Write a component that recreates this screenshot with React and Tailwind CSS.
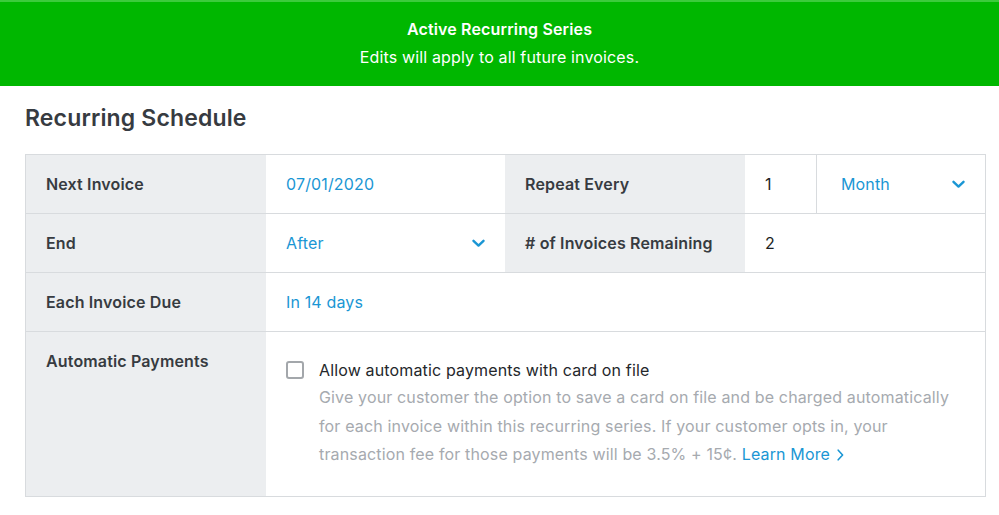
import React from 'react';

const Chevron = () => (
  <svg width="13" height="9" viewBox="0 0 13 9" className="shrink-0">
    <path d="M1.5 1.8 L6.5 6.6 L11.5 1.8" fill="none" stroke="#1a96d4" strokeWidth="2.4" strokeLinecap="round" strokeLinejoin="round" />
  </svg>
);

const Label = ({ children, className = '' }) => (
  <div className={`bg-[#eceef0] px-5 flex items-center font-semibold text-[#373b41] ${className}`}>
    {children}
  </div>
);

const App = () => {
  return (
    <div className="w-[999px] h-[515px] bg-white text-[16px] tracking-[0.15px]" style={{ fontFamily: 'Inter, "Open Sans", sans-serif' }}>
      {/* banner */}
      <div className="h-[86px] bg-[#00b700] border-t-2 border-[#3ccb3c] flex flex-col items-center justify-center text-white">
        <div className="font-semibold leading-[24px] -mt-[2px]">Active Recurring Series</div>
        <div className="leading-[24px] mt-[4px]">Edits will apply to all future invoices.</div>
      </div>

      <div className="pl-[25px] pr-[14px]">
        <h2 className="text-[23px] font-semibold text-[#373b41] h-[68px] flex items-center pb-[3px]">Recurring Schedule</h2>

        <div className="border border-[#d8dbde] w-[961px]">
          {/* row 1 */}
          <div className="grid grid-cols-[240px_239px_240px_71px_1fr] h-[58px]">
            <Label>Next Invoice</Label>
            <div className="flex items-center px-5 text-[#1a96d4]">07/01/2020</div>
            <Label>Repeat Every</Label>
            <div className="flex items-center px-5 text-[#1c1f23]">1</div>
            <div className="flex items-center justify-between pl-6 pr-5 border-l border-[#d8dbde] text-[#1a96d4]">
              <span>Month</span>
              <Chevron />
            </div>
          </div>
          {/* row 2 */}
          <div className="grid grid-cols-[240px_239px_240px_1fr] h-[59px] border-t border-[#d8dbde]">
            <Label>End</Label>
            <div className="flex items-center justify-between px-5 text-[#1a96d4]">
              <span>After</span>
              <Chevron />
            </div>
            <Label># of Invoices Remaining</Label>
            <div className="flex items-center px-5 text-[#1c1f23]">2</div>
          </div>
          {/* row 3 */}
          <div className="grid grid-cols-[240px_1fr] h-[59px] border-t border-[#d8dbde]">
            <Label>Each Invoice Due</Label>
            <div className="flex items-center px-5 text-[#1a96d4]">In 14 days</div>
          </div>
          {/* row 4 */}
          <div className="grid grid-cols-[240px_1fr] h-[165px] border-t border-[#d8dbde]">
            <div className="bg-[#eceef0] px-5 pt-[17px] font-semibold text-[#373b41]">Automatic Payments</div>
            <div className="flex pl-5 pr-6 pt-[25px] gap-[15px]">
              <div className="w-[18px] h-[18px] mt-[4px] shrink-0 rounded-[3px] border-2 border-[#a3a7ab] bg-white" />
              <div className="w-[644px]">
                <div className="text-[#24272b] leading-[26px]">Allow automatic payments with card on file</div>
                <p className="text-[#a6aaaf] leading-[28.5px]">
                  Give your customer the option to save a card on file and be charged automatically for each invoice within this recurring series. If your customer opts in, your transaction fee for those payments will be 3.5% + 15¢.{' '}
                  <a className="text-[#1a96d4]">Learn More</a>
                  <svg width="7" height="12" viewBox="0 0 7 12" className="inline-block ml-[7px] align-[-1px]">
                    <path d="M1.2 1.2 L5.6 6 L1.2 10.8" fill="none" stroke="#1a96d4" strokeWidth="1.6" strokeLinecap="round" strokeLinejoin="round" />
                  </svg>
                </p>
              </div>
            </div>
          </div>
        </div>
      </div>
    </div>
  );
};

export default App;
